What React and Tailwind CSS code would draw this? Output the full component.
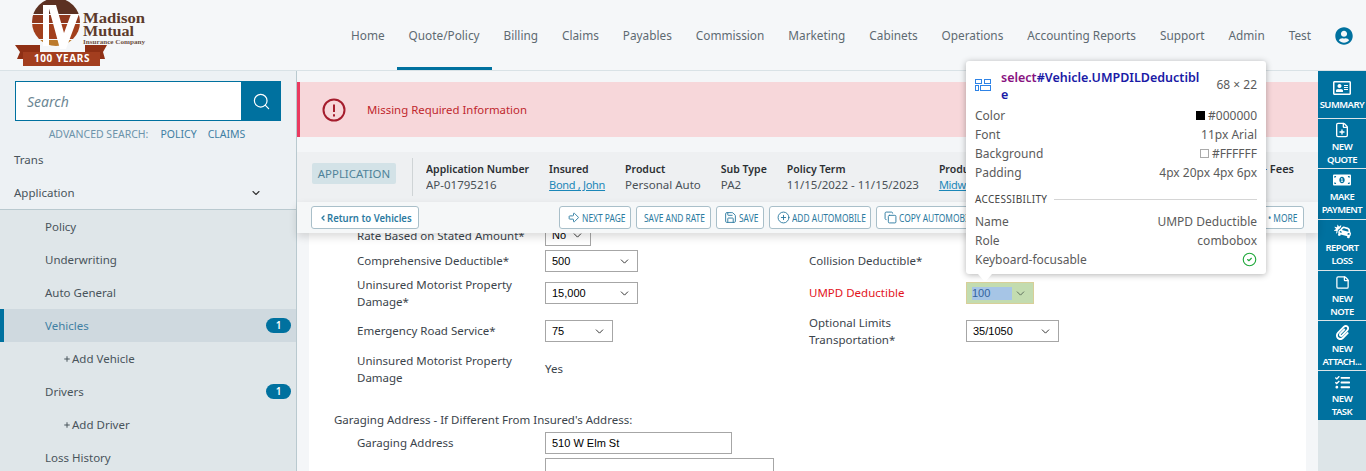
import React from 'react';
import { ChevronDown, ChevronLeft, Search, CirclePlus, Save, Copy, ArrowBigRight, CircleCheck, Plus, FilePlus, StickyNote } from 'lucide-react';
import { FaRegAddressCard, FaMoneyBillAlt, FaCarCrash, FaPaperclip, FaTasks, FaUserCircle } from 'react-icons/fa';

const navItems = ['Home', 'Quote/Policy', 'Billing', 'Claims', 'Payables', 'Commission', 'Marketing', 'Cabinets', 'Operations', 'Accounting Reports', 'Support', 'Admin', 'Test'];

const subMenu = [
  { label: 'Policy' },
  { label: 'Underwriting' },
  { label: 'Auto General' },
  { label: 'Vehicles', active: true, badge: 1 },
  { label: 'Add Vehicle', add: true },
  { label: 'Drivers', badge: 1 },
  { label: 'Add Driver', add: true },
  { label: 'Loss History' },
];

const railItems = [
  { lines: ['SUMMARY'], Icon: FaRegAddressCard, h: 'h-[47px] pt-[8px]', size: 18 },
  { lines: ['NEW', 'QUOTE'], Icon: FilePlus, h: 'h-[49px] pt-[2px]', size: 16 },
  { lines: ['MAKE', 'PAYMENT'], Icon: FaMoneyBillAlt, h: 'h-[50px] pt-[2px]', size: 18 },
  { lines: ['REPORT', 'LOSS'], Icon: FaCarCrash, h: 'h-[50px] pt-[2px]', size: 17 },
  { lines: ['NEW', 'NOTE'], Icon: StickyNote, h: 'h-[49px] pt-[2px]', size: 15 },
  { lines: ['NEW', 'ATTACH...'], Icon: FaPaperclip, h: 'h-[49px] pt-[2px]', size: 15 },
  { lines: ['NEW', 'TASK'], Icon: FaTasks, h: 'h-[49px] pt-[2px]', size: 15 },
];

const Logo = () => (
  <svg width="150" height="68" viewBox="0 0 150 68" className="block">
    <clipPath id="seal"><circle cx="56" cy="22" r="24" /></clipPath>
    <g clipPath="url(#seal)">
      <rect x="30" y="-5" width="60" height="19" fill="#5c3122" />
      <rect x="30" y="15" width="60" height="8" fill="#90391e" />
      <rect x="30" y="24" width="60" height="15" fill="#a23f1c" />
      <rect x="30" y="40" width="60" height="8" fill="#bb7a2c" />
    </g>
    <path d="M48 5 H56 L64 33 L71 14 H79 L66 49 H60 Z" fill="#fff" />
    <path d="M43 5 H49 V46 H43 Z" fill="#fff" />
    <path d="M15 45 H40 V52 H23 V59 L17 59 L20 52 Z" fill="#8f3015" />
    <path d="M107 45 H85 V52 H100 V59 L105 59 L103 52 Z" fill="#8f3015" />
    <rect x="23" y="52" width="77" height="14" fill="#a33e1f" />
    <text x="62" y="62" textAnchor="middle" fontFamily="'Noto Sans', sans-serif" fontWeight="700" fontSize="10" letterSpacing="0.6" fill="#fff">100 YEARS</text>
    <text x="83" y="23" textLength="62" lengthAdjust="spacingAndGlyphs" fontFamily="'Liberation Serif', serif" fontWeight="700" fontSize="15.5" fill="#5c3a2b">Madison</text>
    <text x="83" y="36" textLength="51" lengthAdjust="spacingAndGlyphs" fontFamily="'Liberation Serif', serif" fontWeight="700" fontSize="15.5" fill="#5c3a2b">Mutual</text>
    <text x="83" y="43.5" textLength="62" lengthAdjust="spacingAndGlyphs" fontFamily="'Liberation Serif', serif" fontWeight="700" fontSize="6" fill="#6d5044">Insurance Company</text>
  </svg>
);

const Field = ({ label, value, link }) => (
  <div className="shrink-0">
    <div className="text-[10.5px] leading-[16px] font-semibold text-[#2b2f33] whitespace-nowrap">{label}</div>
    <div className={link ? 'text-[11px] tracking-[-0.3px] leading-[16px] text-[#1b87b8] underline whitespace-nowrap' : 'text-[11.5px] leading-[16px] text-[#4a5157] whitespace-nowrap'}>{value}</div>
  </div>
);

const ToolButton = ({ Icon, children, className = '' }) => (
  <button className={`h-[23px] pl-[7px] flex items-center gap-[2px] shrink-0 bg-white border border-[#a9bfc9] rounded-[3px] text-[#2c7aa0] text-[11.5px] whitespace-nowrap ${className}`}>
    {Icon && <Icon size={13} strokeWidth={1.7} className="shrink-0" />}
    <span className="inline-block origin-left scale-x-[0.73]">{children}</span>
  </button>
);

const Select = ({ value, className = '' }) => (
  <div className={`h-[22px] flex items-center justify-between pl-[6px] pr-[6px] bg-white border border-[#a6a6a6] text-[11px] text-black font-['Liberation_Sans',Arial,sans-serif] ${className}`}>
    <span>{value}</span>
    <ChevronDown size={13} strokeWidth={1.8} className="text-[#333]" />
  </div>
);

const Label = ({ children, className = '' }) => (
  <div className={`text-[11.5px] leading-[17px] text-[#3b444b] ${className}`}>{children}</div>
);

const InfoRow = ({ label, value }) => (
  <div className="flex justify-between items-center h-[19px] text-[12px] text-[#5b5b5b]">
    <span>{label}</span>
    {value}
  </div>
);

const App = () => {
  return (
    <div className="relative w-[1366px] h-[471px] overflow-hidden bg-white font-['Noto_Sans',sans-serif]">
      {/* header */}
      <header className="h-[71px] flex bg-[#f5f7f9] border-b border-[#d9e2e6]">
        <div className="w-[297px] shrink-0 overflow-hidden"><Logo /></div>
        <nav className="flex-1 flex items-stretch justify-end pr-[43px]">
          {navItems.map((item) => (
            <a key={item} className={item === 'Quote/Policy'
              ? 'px-[12px] pt-[26px] text-[11.8px] leading-[18px] text-[#5e6a72] border-b-[3px] border-[#00719f] whitespace-nowrap'
              : 'px-[12px] pt-[26px] text-[11.8px] leading-[18px] text-[#5e6a72] whitespace-nowrap'}>
              {item}
            </a>
          ))}
        </nav>
        <div className="absolute left-[1335px] top-[27px] text-[#00719f]"><FaUserCircle size={18} /></div>
      </header>

      <div className="flex h-[400px]">
        {/* sidebar */}
        <aside className="w-[297px] shrink-0 bg-[#edf1f4] border-r border-[#b9c9cf] overflow-hidden">
          <div className="pt-[10px] pl-[15px] pr-[15px]">
            <div className="flex h-[40px] border border-[#00719f] bg-white">
              <div className="flex-1 pl-[11px] flex items-center italic text-[14px] text-[#6d8794]">Search</div>
              <div className="w-[40px] -mr-px bg-[#00719f] flex items-center justify-center text-white"><Search size={19} strokeWidth={1.5} /></div>
            </div>
            <div className="mt-[5px] flex justify-center gap-[11px] text-[10.5px] leading-[16px] text-[#6c93aa] pr-[2px]">
              <span className="mr-[1px]">ADVANCED SEARCH:</span>
              <span className="text-[#3f7fa3]">POLICY</span>
              <span className="text-[#3f7fa3]">CLAIMS</span>
            </div>
          </div>
          <div className="mt-[1px]">
            <div className="h-[33px] pl-[14px] flex items-center text-[11.5px] text-[#49545b]">Trans</div>
            <div className="h-[33px] pl-[14px] pr-[34px] flex items-center justify-between text-[11.5px] text-[#49545b]">
              <span>Application</span>
              <ChevronDown size={12} strokeWidth={2.2} className="text-[#333]" />
            </div>
            <div className="bg-[#dfe6e9] border-t border-[#b9c9cf]">
              {subMenu.map((m) => (
                <div key={m.label} className={m.active
                  ? 'h-[33px] flex items-center justify-between pl-[41px] pr-[5px] bg-[#cfd9df] border-l-4 border-[#00719f] text-[11.5px] text-[#3f7fa3]'
                  : 'h-[33px] flex items-center justify-between pl-[45px] pr-[5px] text-[11.5px] text-[#49545b]'}>
                  {m.add
                    ? <span className="pl-[18px] flex items-center gap-[1px]"><Plus size={8} strokeWidth={3} />{m.label}</span>
                    : <span>{m.label}</span>}
                  {m.badge && <span className="w-[25px] h-[15px] rounded-full bg-[#00719f] text-white text-[10px] leading-[15px] text-center font-semibold">{m.badge}</span>}
                </div>
              ))}
            </div>
          </div>
        </aside>

        {/* main */}
        <main className="flex-1 min-w-0 flex flex-col bg-[#f4f6f8]">
          <div className="h-[55px] mt-[11px] shrink-0 flex items-center bg-[#f7d7da] border-l-[3px] border-[#ea3a60] pl-[22px]">
            <svg width="24" height="24" viewBox="0 0 24 24" fill="none" stroke="#a51d2d" strokeWidth="2"><circle cx="12" cy="12" r="10.5" /><path d="M12 6.5v7.5M12 16.2v2.3" /></svg>
            <span className="ml-[21px] text-[11.4px] text-[#c0272d]">Missing Required Information</span>
          </div>

          <div className="mt-[15px] h-[50px] shrink-0 flex items-center bg-[#eef0f2] pl-[15px] pr-[24px]">
            <span className="-mt-[7px] h-[21px] w-[84px] flex items-center justify-center rounded-[2px] bg-[#d3e2e7] text-[11.4px] text-[#4f8299]">APPLICATION</span>
            <div className="w-px h-[38px] bg-[#cfd4d6] ml-[16px] mr-[13px]" />
            <div className="flex-1 flex gap-[20px] overflow-hidden">
              <Field label="Application Number" value="AP-01795216" />
              <Field label="Insured" value="Bond , John" link />
              <Field label="Product" value="Personal Auto" />
              <Field label="Sub Type" value="PA2" />
              <Field label="Policy Term" value="11/15/2022 - 11/15/2023" />
              <Field label="Producer" value="Midwest" link />
              <div className="ml-auto text-[11px] leading-[16px] font-semibold text-[#2b2f33] whitespace-nowrap">Premium + Fees</div>
            </div>
          </div>

          <div className="relative z-10 h-[31px] shrink-0 flex items-center bg-[#f5f7f8] pl-[14px] pr-[14px] shadow-[0_4px_8px_rgba(0,0,0,0.14)]">
            <button className="h-[23px] w-[108px] pl-[7px] flex items-center shrink-0 bg-white border border-[#a9bfc9] rounded-[3px] text-[11.5px] font-semibold text-[#2c7aa0] whitespace-nowrap">
              <ChevronLeft size={8} strokeWidth={4} className="shrink-0" />
              <span className="inline-block origin-left scale-x-[0.83]">Return to Vehicles</span>
            </button>
            <div className="ml-[140px] flex-1 flex gap-[5px] overflow-hidden">
              <ToolButton Icon={ArrowBigRight} className="w-[72px]">NEXT PAGE</ToolButton>
              <ToolButton className="w-[75px] pl-[6px]">SAVE AND RATE</ToolButton>
              <ToolButton Icon={Save} className="w-[48px]">SAVE</ToolButton>
              <ToolButton Icon={CirclePlus} className="w-[102px]">ADD AUTOMOBILE</ToolButton>
              <ToolButton Icon={Copy} className="w-[110px]">COPY AUTOMOBILE</ToolButton>
              <ToolButton className="ml-auto w-[44px]">• MORE</ToolButton>
            </div>
          </div>

          {/* form */}
          <div className="flex-1 min-h-0 ml-[12px] mr-[12px] bg-white overflow-hidden">
            <div className="-mt-[9px] pl-[48px] flex flex-col gap-[4px]">
              <div className="grid grid-cols-[188px_264px_157px_1fr] items-center">
                <Label>Rate Based on Stated Amount*</Label>
                <Select value="No" className="w-[46px]" />
              </div>
              <div className="grid grid-cols-[188px_264px_157px_1fr] items-center">
                <Label className="-mt-[2px]">Comprehensive Deductible*</Label>
                <Select value="500" className="w-[93px]" />
                <Label className="-mt-[2px]">Collision Deductible*</Label>
              </div>
              <div className="grid grid-cols-[188px_264px_157px_1fr] items-center">
                <Label className="w-[170px]">Uninsured Motorist Property Damage*</Label>
                <Select value="15,000" className="w-[93px]" />
                <Label className="-mt-[2px] text-[#e3141c]">UMPD Deductible</Label>
                <div className="h-[22px] w-[68px] flex items-center justify-between pl-[6px] pr-[6px] bg-[#c3dcb0] border border-[#d8cf98] text-[11px] text-[#33639c] font-['Liberation_Sans',Arial,sans-serif]">
                  <span className="w-[40px] -ml-[1px] bg-[#a6c5e6] leading-[13px]">100</span>
                  <ChevronDown size={13} strokeWidth={1.8} className="text-[#5c6d5c]" />
                </div>
              </div>
              <div className="grid grid-cols-[188px_264px_157px_1fr] items-center">
                <Label className="-mt-[2px]">Emergency Road Service*</Label>
                <Select value="75" className="w-[68px]" />
                <Label className="w-[120px]">Optional Limits Transportation*</Label>
                <Select value="35/1050" className="w-[93px]" />
              </div>
              <div className="grid grid-cols-[188px_264px_157px_1fr] items-center">
                <Label className="w-[170px]">Uninsured Motorist Property Damage</Label>
                <Label className="-mt-[2px]">Yes</Label>
              </div>
              <Label className="-ml-[23px] mt-[21px]">Garaging Address - If Different From Insured's Address:</Label>
              <div className="grid grid-cols-[188px_1fr] items-center">
                <Label className="-mt-[2px]">Garaging Address</Label>
                <div className="h-[22px] w-[187px] pl-[6px] flex items-center bg-white border border-[#a6a6a6] text-[11px] text-black font-['Liberation_Sans',Arial,sans-serif]">510 W Elm St</div>
              </div>
              <div className="grid grid-cols-[188px_1fr] items-center">
                <div />
                <div className="h-[22px] w-[229px] bg-white border border-[#a6a6a6]" />
              </div>
            </div>
          </div>
        </main>

        {/* action rail */}
        <aside className="w-[48px] shrink-0 bg-[#dde5e8] flex flex-col gap-px">
          {railItems.map(({ lines, Icon, h, size }) => (
            <button key={lines.join()} className={`${h} bg-[#00719f] text-white flex flex-col items-center`}>
              <span className="h-[18px] flex items-center justify-center"><Icon size={size} /></span>
              <span className="mt-[1px] text-[9.5px] leading-[13px] font-semibold tracking-[-0.5px] whitespace-nowrap">
                {lines.map((l) => <span key={l} className="block">{l}</span>)}
              </span>
            </button>
          ))}
        </aside>
      </div>

      {/* devtools inspect tooltip */}
      <div className="absolute z-20 left-[966px] top-[61px] w-[300px] h-[213px] bg-white rounded-[3px] shadow-[0_1px_6px_rgba(0,0,0,0.3)] px-[9px] pt-[8px] text-[12px] text-[#5b5b5b]">
        <div className="flex">
          <svg width="16" height="12" viewBox="0 0 16 12" fill="none" stroke="#2e83e6" strokeWidth="1" className="mt-[10px] shrink-0">
            <rect x="0.5" y="0.5" width="6" height="4" /><rect x="9.5" y="0.5" width="6" height="4" /><rect x="0.5" y="6.5" width="3" height="5" /><rect x="5.5" y="6.5" width="10" height="5" />
          </svg>
          <div className="ml-[10px] w-[199px] text-[12.5px] leading-[17px] font-semibold text-[#1a1aa6] break-all"><span className="text-[#881280]">select</span>#Vehicle.UMPDILDeductible</div>
          <span className="ml-auto mt-[7px] h-[18px] text-[12px]">68 × 22</span>
        </div>
        <div className="mt-[3px]">
          <InfoRow label="Color" value={<span className="flex items-center gap-[3px]"><span className="w-[9px] h-[9px] bg-black" />#000000</span>} />
          <InfoRow label="Font" value="11px Arial" />
          <InfoRow label="Background" value={<span className="flex items-center gap-[3px]"><span className="w-[9px] h-[9px] bg-white border border-[#aaa]" />#FFFFFF</span>} />
          <InfoRow label="Padding" value="4px 20px 4px 6px" />
        </div>
        <div className="mt-[10px] flex items-center gap-[7px] text-[10px] leading-[14px] tracking-[0.3px] text-[#444]">
          ACCESSIBILITY<span className="flex-1 h-px bg-[#d5d5d5]" />
        </div>
        <div className="mt-[6px]">
          <InfoRow label="Name" value="UMPD Deductible" />
          <InfoRow label="Role" value="combobox" />
          <InfoRow label="Keyboard-focusable" value={<CircleCheck size={15} strokeWidth={1.8} className="text-[#1fa83a]" />} />
        </div>
        <div className="absolute left-[12px] -bottom-[8px] w-0 h-0 border-x-[7px] border-x-transparent border-t-[8px] border-t-white" />
      </div>
    </div>
  );
};

export default App;
